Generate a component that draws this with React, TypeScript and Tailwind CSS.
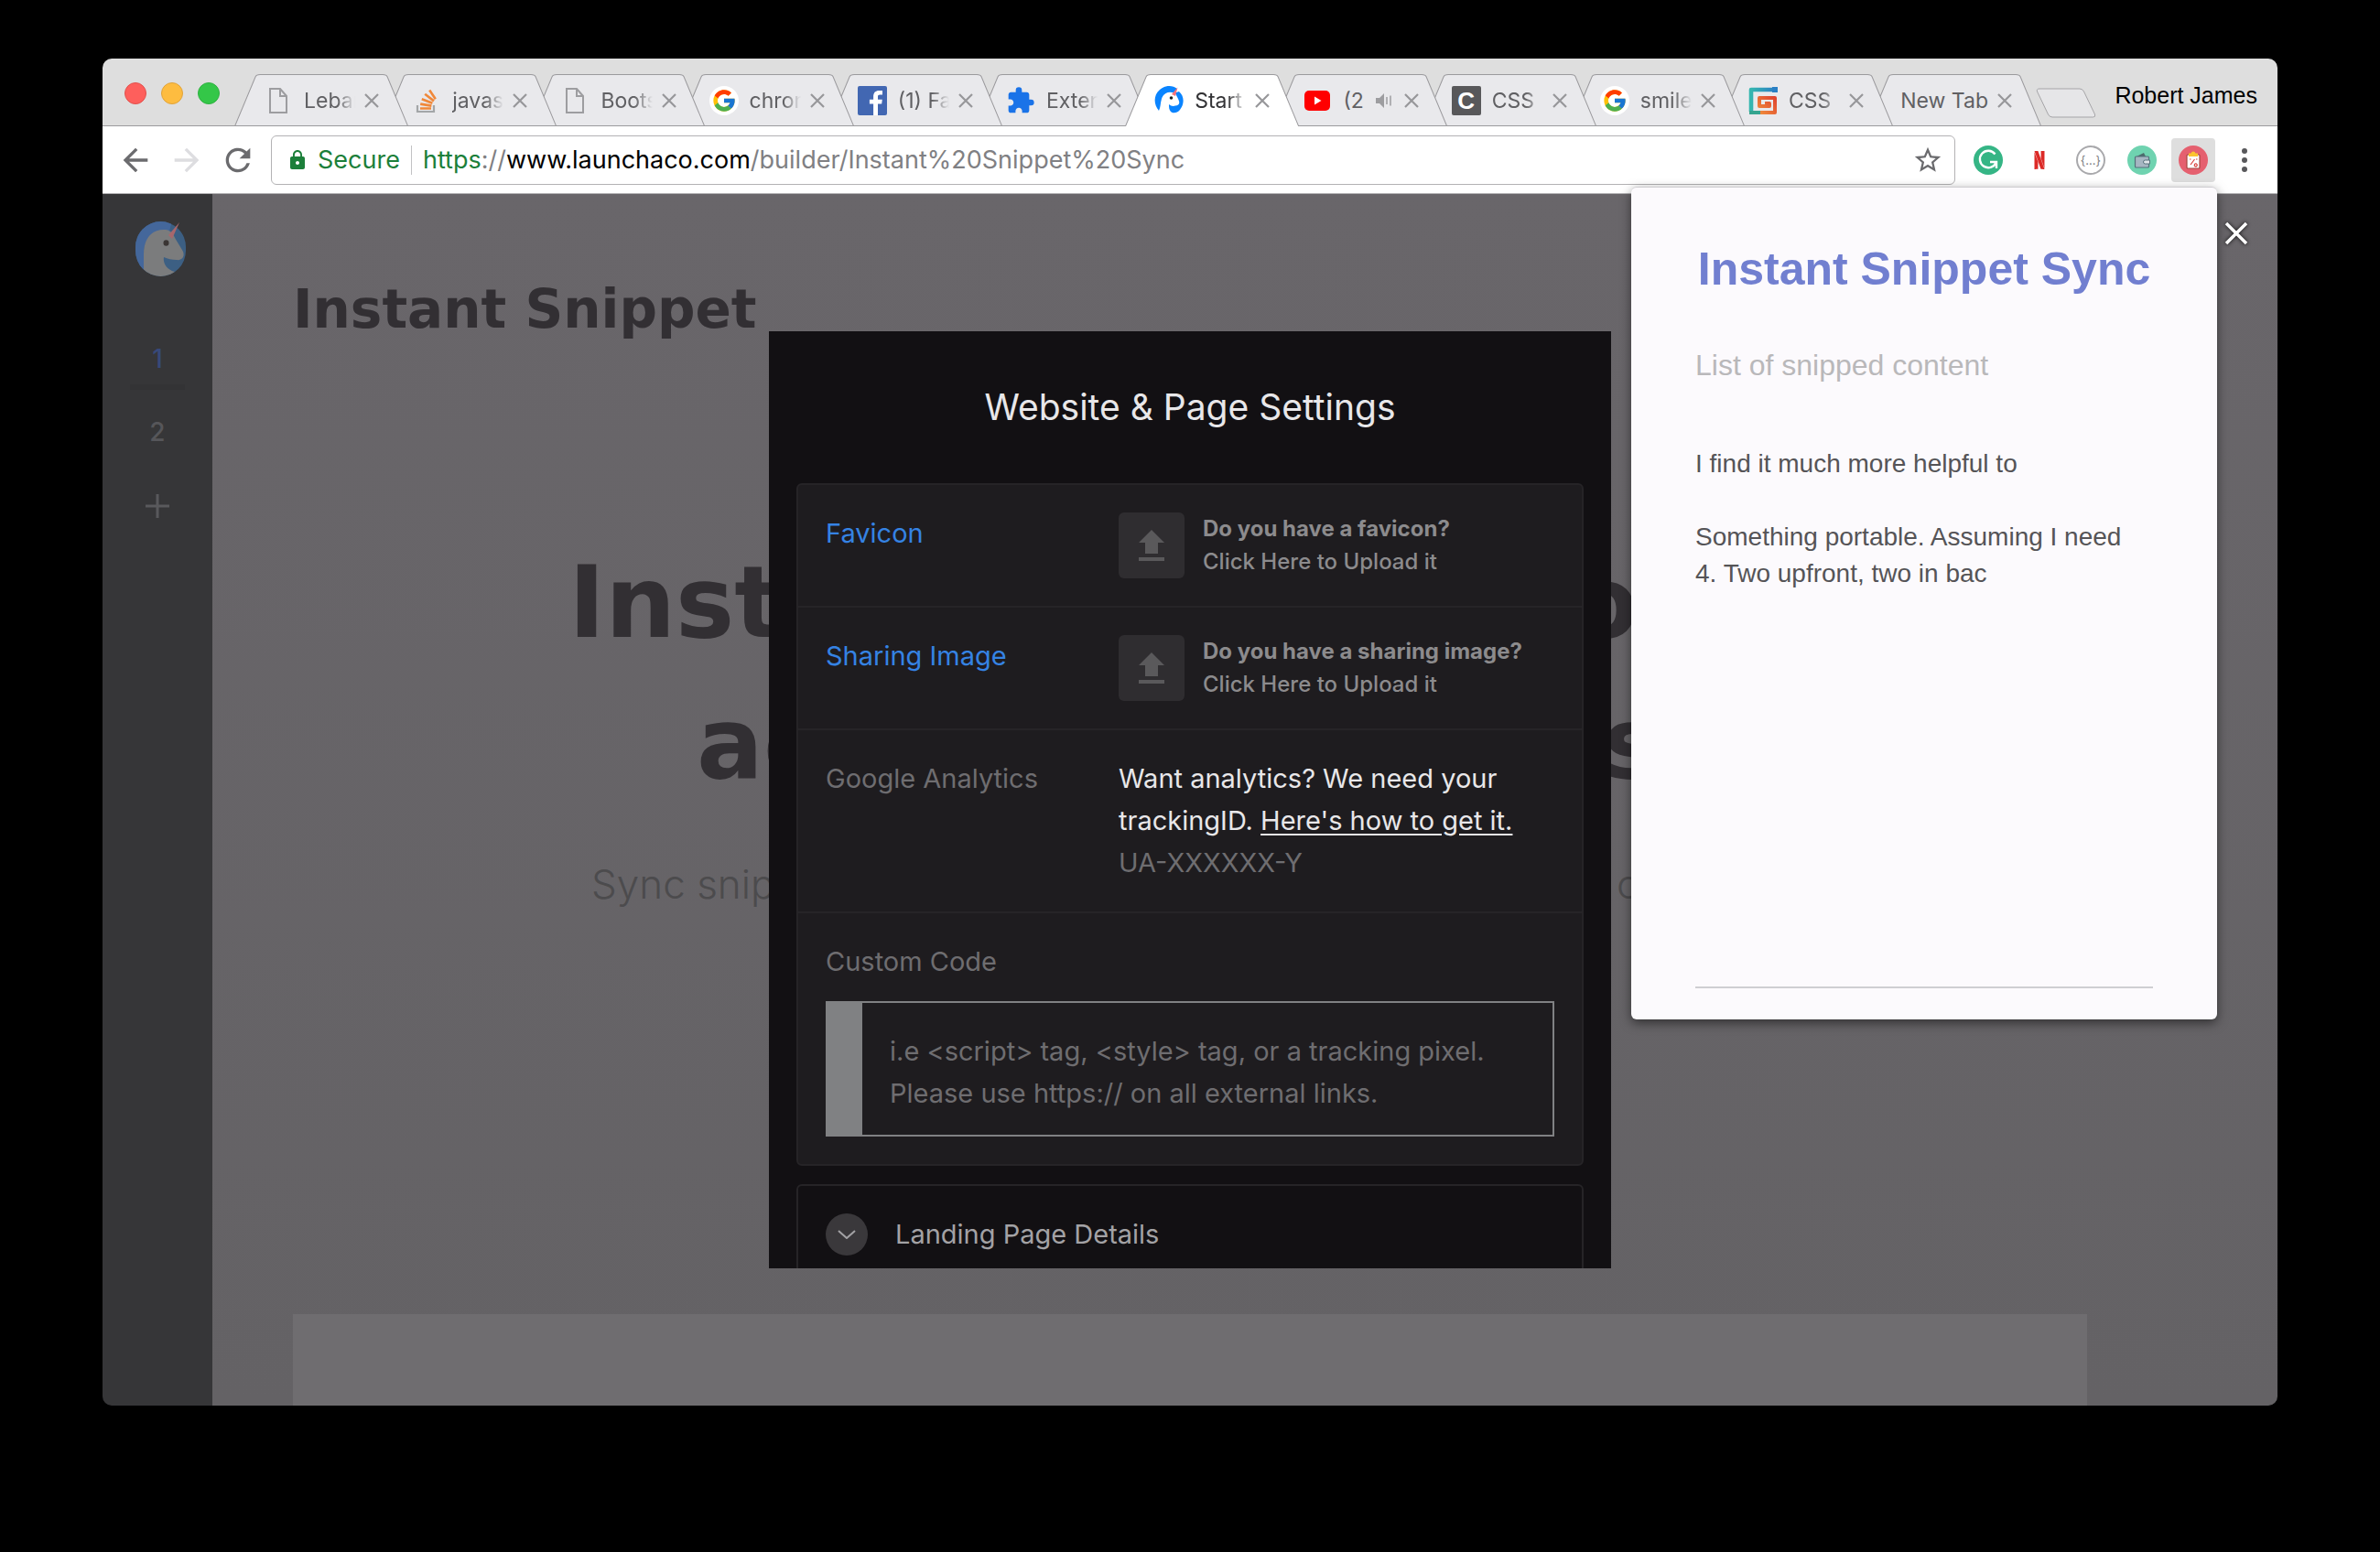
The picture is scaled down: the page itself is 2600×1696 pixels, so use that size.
import React from "react";
import { FcGoogle } from "react-icons/fc";
import { MdArrowBack, MdArrowForward, MdExtension, MdLock, MdRefresh, MdStarBorder } from "react-icons/md";
import { SiNetflix } from "react-icons/si";

function DocIcon() {
  return (
    <svg viewBox="0 0 32 32" className="size-8" fill="none" stroke="#9d9da0" strokeWidth="2">
      <path d="M7 3h11l7 8v18H7z" />
      <path d="M18 3v8h7" />
    </svg>
  );
}

function StackIcon() {
  return (
    <svg viewBox="0 0 32 32" className="size-8" fill="none">
      <path d="M6 21v7h18v-7" stroke="#a3a6a8" strokeWidth="2.2" />
      <g stroke="#f0883a" strokeWidth="2.6">
        <path d="M9 24.5h12" />
        <path d="M9.2 19.6l12.2 2" />
        <path d="M10.8 14.2l11.6 4.6" />
        <path d="M14.2 8.8l9.8 7.6" />
        <path d="M19.2 4.6l6.6 9.6" />
      </g>
    </svg>
  );
}

function GoogleIcon() {
  return (
    <span className="flex size-8 items-center justify-center rounded-full bg-white">
      <FcGoogle className="size-7" />
    </span>
  );
}

function FacebookIcon() {
  return (
    <svg viewBox="0 0 32 32" className="size-8">
      <rect width="32" height="32" rx="2" fill="#4267b2" />
      <path
        d="M22 32V19.6h4.2l.6-4.8H22v-3.1c0-1.4.4-2.3 2.4-2.3H27V5.1c-.5-.1-2-.2-3.7-.2-3.7 0-6.2 2.200-6.200 6.400v3.500h-4.200v4.800h4.200V32z"
        fill="#fff"
      />
    </svg>
  );
}

function UnicornTabIcon() {
  return (
    <svg viewBox="0 0 32 32" className="size-8">
      <path
        d="M5 27C-1 20-1 10 6 4 12-1 20-1 25 3l-3 5c-5-3-12-1-14 6-1.500 5-1 9-3 13z"
        fill="#0a84ff"
      />
      <path
        d="M27 6c6 5 6 14 1 20-3 4-8 4-10 2-2-2-2-5-2-8 2 2 5 2.500 7 1.500 3 0 5-2 4-5-.5-2-2.500-6-4.500-9z"
        fill="#0a84ff"
      />
      <path d="M25.500 1.500l-6.500 7.500 4 2z" fill="#f4737c" />
      <circle cx="18.500" cy="13" r="1.800" fill="#222" />
    </svg>
  );
}

function YoutubeIcon() {
  return (
    <svg viewBox="0 0 32 32" className="size-8">
      <rect x="2" y="5" width="28" height="22" rx="5" fill="#f00" />
      <path d="M13 11.500v9l7.500-4.500z" fill="#fff" />
    </svg>
  );
}

function CssTricksIcon() {
  return (
    <span className="flex size-8 items-center justify-center rounded-xs bg-[#58585a] font-['Liberation_Sans',sans-serif] text-[26px] leading-8 font-bold text-white">
      C
    </span>
  );
}

function SpiralIcon() {
  return (
    <svg viewBox="0 0 32 32" className="size-8" fill="none" strokeWidth="4.600" strokeLinejoin="round">
      <defs>
        <linearGradient id="spiralCool" x1="0" y1="0" x2="1" y2="0">
          <stop offset="0" stopColor="#35b6b0" />
          <stop offset="1" stopColor="#2a7fc4" />
        </linearGradient>
        <linearGradient id="spiralWarm" x1="0" y1="1" x2="1" y2="0">
          <stop offset="0" stopColor="#ef8a3c" />
          <stop offset="1" stopColor="#e0452f" />
        </linearGradient>
      </defs>
      <path d="M29 4H3v24" stroke="url(#spiralCool)" />
      <path d="M1 29h12" stroke="#35a58f" strokeWidth="4" />
      <path d="M13 29h16V13H12v9h11v-3h-5" stroke="url(#spiralWarm)" strokeWidth="4" />
      <path d="M26 1h6v6h-6z" fill="#2a7fc4" />
    </svg>
  );
}

function SpeakerIcon() {
  return (
    <svg viewBox="0 0 20 20" className="size-5 shrink-0">
      <path d="M1 7h4l5-5v16l-5-5H1z" fill="#9d9da0" />
      <path d="M13 6v8M17 4.500v11" stroke="#9d9da0" strokeWidth="1.500" />
    </svg>
  );
}

type TabInfo = { title: string; icon?: React.ReactNode; active?: boolean; audio?: boolean };

const tabs: TabInfo[] = [
  { title: "Lebanon", icon: <DocIcon /> },
  { title: "javascript", icon: <StackIcon /> },
  { title: "Bootstrap", icon: <DocIcon /> },
  { title: "chrome", icon: <GoogleIcon /> },
  { title: "(1) Facebook", icon: <FacebookIcon /> },
  { title: "Extensions", icon: <MdExtension className="size-8 text-[#1a73e8]" /> },
  { title: "Start", icon: <UnicornTabIcon />, active: true },
  { title: "(2", icon: <YoutubeIcon />, audio: true },
  { title: "CSS", icon: <CssTricksIcon /> },
  { title: "smiley", icon: <GoogleIcon /> },
  { title: "CSS", icon: <SpiralIcon /> },
  { title: "New Tab" },
];

function Tab({ tab, order }: { tab: TabInfo; order: number }) {
  return (
    <div className="relative -ml-7 flex h-[57px] min-w-0 flex-1 items-center first:ml-0" style={{ zIndex: order }}>
      <svg viewBox="0 0 190 57" preserveAspectRatio="none" className="absolute inset-0 h-full w-full">
        <path
          d="M.5 57 23 3Q24 .5 28 .5H162Q166 .5 167 3L189.500 57"
          fill={tab.active ? "#ffffff" : "#e9e9ec"}
          stroke="#9b9a9d"
          strokeWidth="1"
        />
        {!tab.active && <path d="M0 56.500H190" stroke="#9b9a9d" strokeWidth="1" />}
      </svg>
      <button
        type="button"
        className={
          tab.icon
            ? "relative ml-8 flex min-w-0 flex-1 items-center gap-3 text-left"
            : "relative ml-9 flex min-w-0 flex-1 items-center text-left"
        }
      >
        {tab.icon && <span className="flex size-8 shrink-0 items-center justify-center">{tab.icon}</span>}
        <span
          className={
            (tab.icon && !tab.audio
              ? "min-w-0 flex-1 overflow-hidden whitespace-nowrap [mask-image:linear-gradient(to_right,black_65%,transparent)] "
              : "whitespace-nowrap ") +
            (tab.active ? "text-[#333336]" : "text-[#606063]") +
            " text-[23px] leading-8"
          }
        >
          {tab.title}
        </span>
        {tab.audio && <SpeakerIcon />}
      </button>
      <button type="button" aria-label={`Close ${tab.title}`} className="relative mr-[30px] ml-2 flex size-5 shrink-0 items-center justify-center">
        <svg viewBox="0 0 16 16" className="size-4" stroke="#97979a" strokeWidth="2.200">
          <path d="M1 1l14 14M15 1L1 15" />
        </svg>
      </button>
    </div>
  );
}

function TabStrip() {
  return (
    <div className="flex h-[74px] items-end bg-[#dedede] shadow-[inset_0_-1px_0_#9b9a9d]">
      <div className="flex w-36 gap-4 self-start pt-[26px] pl-6">
        <button type="button" aria-label="Close window" className="size-6 rounded-full border border-[#e2504c] bg-[#fe5f5c]" />
        <button type="button" aria-label="Minimize window" className="size-6 rounded-full border border-[#e0a33a] bg-[#fdbc40]" />
        <button type="button" aria-label="Zoom window" className="size-6 rounded-full border border-[#2fb141] bg-[#34c748]" />
      </div>
      <div className="relative isolate flex min-w-0 flex-1">
        {tabs.map((tab, i) => (
          <Tab key={i} tab={tab} order={tab.active ? tabs.length + 1 : tabs.length - i} />
        ))}
      </div>
      <button type="button" aria-label="New tab" className="-ml-1.5 self-start pt-8">
        <svg viewBox="0 0 66 33" className="h-[33px] w-[66px]" fill="#e6e6e8" stroke="#a5a4a7" strokeWidth="1">
          <path d="M4 1h44q3 0 4.500 3l12 25q1 3-2 3H18q-3 0-4.500-3L1.500 4Q.5 1 4 1z" />
        </svg>
      </button>
      <button type="button" className="mr-[22px] ml-5 self-start pt-6 font-['Liberation_Sans',Arial,sans-serif] text-[25px] leading-8 whitespace-nowrap text-black">
        Robert James
      </button>
    </div>
  );
}

function Toolbar() {
  return (
    <div className="flex h-[74px] items-center border-b border-[#b3b2b4] bg-white pr-3 pl-2">
      <button type="button" aria-label="Back" className="flex w-14 shrink-0 justify-center">
        <MdArrowBack className="size-10 text-[#6b6b6e]" />
      </button>
      <button type="button" aria-label="Forward" className="flex w-14 shrink-0 justify-center">
        <MdArrowForward className="size-10 text-[#dddde0]" />
      </button>
      <button type="button" aria-label="Reload" className="mr-2 flex w-14 shrink-0 justify-center">
        <MdRefresh className="size-10 text-[#6b6b6e]" />
      </button>
      <div className="flex h-[54px] min-w-0 flex-1 items-center rounded-md border border-[#b3b2b4] pr-3 pl-4 text-[27px] leading-9">
        <MdLock className="size-6 shrink-0 text-[#1c7f3a]" />
        <span className="ml-2.5 text-[#1c7f3a]">Secure</span>
        <span className="mx-3 h-8 w-px bg-[#c2c2c4]" />
        <div className="min-w-0 flex-1 truncate text-[#808083]">
          <span className="text-[#1c7f3a]">https</span>://<span className="text-black">www.launchaco.com</span>
          /builder/Instant%20Snippet%20Sync
        </div>
        <button type="button" aria-label="Bookmark this page">
          <MdStarBorder className="size-[34px] text-[#6b6b6e]" />
        </button>
      </div>
      <div className="ml-3 flex shrink-0 items-center gap-2">
        <button type="button" aria-label="Grammarly" className="flex size-12 items-center justify-center">
          <svg viewBox="0 0 32 32" className="size-8">
            <circle cx="16" cy="16" r="16" fill="#35b585" />
            <path d="M23.500 9.500A9.200 9.200 0 1 0 24.800 18" fill="none" stroke="#fff" strokeWidth="2.400" />
            <path d="M18 18h7v7" fill="none" stroke="#fff" strokeWidth="2.400" />
          </svg>
        </button>
        <button type="button" aria-label="Netflix" className="flex size-12 items-center justify-center">
          <SiNetflix className="size-5 text-[#dc2a27]" />
        </button>
        <button type="button" aria-label="JSON viewer" className="flex size-12 items-center justify-center">
          <span className="flex size-8 items-center justify-center rounded-full border-2 border-[#a9a9ac] text-[13px] leading-4 text-[#7d7d80]">
            {"{...}"}
          </span>
        </button>
        <button type="button" aria-label="Wallet" className="flex size-12 items-center justify-center">
          <svg viewBox="0 0 32 32" className="size-8">
            <circle cx="16" cy="16" r="16" fill="#6fd3b0" />
            <path d="M10 12l8-4 2 4z" fill="#4c6b6c" />
            <rect x="8.500" y="12" width="15" height="12" rx="1" fill="#a6b6c2" stroke="#55707a" strokeWidth="1.200" />
            <path d="M24.500 16h-5a2 2 0 0 0 0 4h5z" fill="#dfe6ea" stroke="#55707a" strokeWidth="1" />
          </svg>
        </button>
        <button type="button" aria-label="Instant Snippet Sync" className="flex size-12 items-center justify-center rounded bg-[#dedede]">
          <svg viewBox="0 0 32 32" className="size-8">
            <circle cx="16" cy="16" r="16" fill="#e5606f" />
            <rect x="9" y="10" width="14" height="15" rx="1" fill="#fff" stroke="#a3463f" strokeWidth="1.200" />
            <path d="M11 8.500h2.500a2.600 2.600 0 0 1 5 0H21V12H11z" fill="#fcc32f" />
            <path d="M13 21l4.500-6M17.500 20.500a1.500 1.500 0 1 0 2.500 0 1.500 1.500 0 0 0-2.500 0M12 15h1.500M19 15h1.500" fill="none" stroke="#d8433c" strokeWidth="1.200" />
          </svg>
        </button>
        <button type="button" aria-label="Browser menu" className="flex h-12 w-12 flex-col items-center justify-center gap-1">
          <span className="size-1.5 rounded-full bg-[#58585b]" />
          <span className="size-1.5 rounded-full bg-[#58585b]" />
          <span className="size-1.5 rounded-full bg-[#58585b]" />
        </button>
      </div>
    </div>
  );
}

function Sidebar() {
  return (
    <nav className="flex w-[120px] shrink-0 flex-col items-center bg-[#363638] pt-[30px]">
      <a href="#home" aria-label="Launchaco" className="ml-2">
        <svg viewBox="0 0 56 60" className="h-[60px] w-14">
          <defs>
            <clipPath id="logoRound">
              <rect width="55" height="60" rx="28" />
            </clipPath>
          </defs>
          <g clipPath="url(#logoRound)">
            <rect width="56" height="60" fill="#3c5f83" />
            <path d="M0 60V0h40l-4 14C22 8 10 16 9 34v26z" fill="#44679b" />
            <path
              d="M9 60V36C9 18 18 9 31 9c5 0 8 2 10 5 4 8 8 13 11 19 2 5-1 10-7 9-5 0-10-1-14-3-1 6 2 13 12 16l-5 5z"
              fill="#7b7c7d"
            />
          </g>
          <path d="M48 1L36 15l4 4z" fill="#a8676c" />
          <ellipse cx="33.500" cy="23.500" rx="3" ry="3.300" fill="#3a3534" />
        </svg>
      </a>
      <a href="#page-1" className="mt-[70px] text-[28px] leading-10 font-medium text-[#37497a]">
        1
      </a>
      <span className="mt-2 h-1.5 w-[60px] bg-[#333335]" />
      <a href="#page-2" className="mt-[26px] text-[28px] leading-10 font-medium text-[#56565a]">
        2
      </a>
      <button type="button" aria-label="Add page" className="mt-12">
        <svg viewBox="0 0 26 26" className="size-[26px]" stroke="#59595c" strokeWidth="3">
          <path d="M13 0v26M0 13h26" />
        </svg>
      </button>
    </nav>
  );
}

function SitePreview() {
  return (
    <div className="flex min-w-0 flex-1 flex-col bg-linear-to-b from-[#69666a] to-[#646265] pr-52 pl-[88px] text-[#322f33]">
      <h1 className="pt-[86px] font-['DejaVu_Sans',sans-serif] text-[58px] leading-20 font-bold">Instant Snippet</h1>
      <h2 className="mt-[204px] font-['DejaVu_Sans',sans-serif] text-[108px] leading-[154px] font-bold whitespace-nowrap">
        <span className="flex justify-between pr-[490px] pl-[301px]">
          <span>Instant</span>
          <span>to</span>
        </span>
        <span className="flex justify-between pr-[464px] pl-[441px]">
          <span>across</span>
          <span>apps</span>
        </span>
      </h2>
      <p className="mt-12 flex justify-between pr-[300px] pl-[326px] text-[44px] leading-14 font-light whitespace-nowrap text-[#4c4b4d]">
        <span>Sync snippets</span>
        <span className="w-[214px]">computers</span>
      </p>
      <div className="mt-auto h-[100px] bg-[#6f6d70]" />
    </div>
  );
}

function UploadRow({ label, question }: { label: string; question: string }) {
  return (
    <div className="flex border-b-2 border-[#262427] px-[30px] py-[30px]">
      <a href="#upload" className="w-80 shrink-0 text-[29px] leading-[46px] text-[#3583e4]">
        {label}
      </a>
      <button type="button" className="flex min-w-0 flex-1 items-center gap-5 text-left text-2xl leading-9 text-[#8c8b8d]">
        <span className="flex size-[72px] shrink-0 items-center justify-center rounded-md bg-[#2f2d30]">
          <svg viewBox="0 0 28 34" className="h-[34px] w-7" fill="#5a595b">
            <path d="M14 0l14 14h-7v12H7V14H0z" />
            <rect y="30" width="28" height="4" />
          </svg>
        </span>
        <span className="flex flex-col">
          <span className="font-bold whitespace-nowrap">{question}</span>
          <span className="font-medium">Click Here to Upload it</span>
        </span>
      </button>
    </div>
  );
}

function SettingsModal() {
  return (
    <section className="flex h-[1024px] w-[920px] flex-col overflow-hidden bg-[#121013] px-[30px]">
      <h2 className="shrink-0 pt-[60px] pb-[60px] text-center text-[39px] leading-[46px] text-[#e8e7e9]">Website &amp; Page Settings</h2>
      <div className="shrink-0 rounded-md border-2 border-[#262427] bg-[#1e1c1f]">
        <UploadRow label="Favicon" question="Do you have a favicon?" />
        <UploadRow label="Sharing Image" question="Do you have a sharing image?" />
        <div className="flex border-b-2 border-[#262427] px-[30px] py-[30px] text-[29px] leading-[46px]">
          <label htmlFor="tracking-id" className="w-80 shrink-0 text-[#6e6d70]">
            Google Analytics
          </label>
          <div className="min-w-0 flex-1">
            <p className="whitespace-nowrap text-[#e8e7e9]">
              Want analytics? We need your
              <br />
              trackingID.{" "}
              <a href="#tracking" className="underline underline-offset-4">
                Here's how to get it.
              </a>
            </p>
            <input
              id="tracking-id"
              placeholder="UA-XXXXXX-Y"
              className="block h-[46px] w-full bg-transparent leading-[46px] outline-none placeholder:text-[#6e6d70]"
            />
          </div>
        </div>
        <div className="px-[30px] py-[30px] text-[29px] leading-[46px]">
          <label htmlFor="custom-code" className="block text-[#6e6d70]">
            Custom Code
          </label>
          <textarea
            id="custom-code"
            placeholder={"i.e <script> tag, <style> tag, or a tracking pixel.\nPlease use https:// on all external links."}
            className="mt-5 block h-[148px] w-full resize-none overflow-hidden border-2 border-l-40 border-[#808183] bg-transparent pt-[30px] pr-4 pl-[30px] outline-none placeholder:text-[#6e6d70]"
          />
        </div>
      </div>
      <div className="mt-5 shrink-0 rounded-md border-2 border-[#262427] px-[30px] py-[30px]">
        <button type="button" className="flex items-center gap-[30px] text-[29px] leading-[46px] text-[#a3a2a5]">
          <span className="flex size-[46px] items-center justify-center rounded-full bg-[#3a383b]">
            <svg viewBox="0 0 20 10" className="h-2.5 w-5" fill="none" stroke="#a3a2a5" strokeWidth="2">
              <path d="M1 1l9 8 9-8" />
            </svg>
          </span>
          Landing Page Details
        </button>
      </div>
    </section>
  );
}

function SnippetPopup() {
  return (
    <aside className="absolute top-[140px] right-[66px] flex h-[910px] w-[640px] flex-col rounded-md border-t border-[#cfced1] bg-[#fcfafd] px-[70px] pb-[34px] font-['Liberation_Sans',Arial,sans-serif] text-[#555457] shadow-[0_4px_12px_rgba(0,0,0,0.5)]">
      <h2 className="pt-[59px] text-center text-[50px] leading-[60px] font-bold whitespace-nowrap text-[#717fd0]">Instant Snippet Sync</h2>
      <h3 className="mt-[55px] text-[32px] leading-10 text-[#b9b8ba]">List of snipped content</h3>
      <ul className="mt-[68px] flex flex-col gap-10 pr-4 text-[28px] leading-10">
        <li>I find it much more helpful to</li>
        <li>Something portable. Assuming I need 4. Two upfront, two in bac</li>
      </ul>
      <hr className="mt-auto border-t-2 border-[#cfced2]" />
    </aside>
  );
}

export default function App() {
  return (
    <div className="flex min-h-screen flex-col bg-black px-28 pt-16 pb-40 font-[Inter,sans-serif]">
      <div className="relative flex flex-1 flex-col">
        <div className="flex flex-1 flex-col overflow-hidden rounded-[10px]">
          <TabStrip />
          <Toolbar />
          <main className="relative flex flex-1">
            <Sidebar />
            <SitePreview />
            <div className="absolute inset-0 flex items-center justify-center">
              <SettingsModal />
            </div>
            <button type="button" aria-label="Close settings" className="absolute top-[30px] right-8">
              <svg viewBox="0 0 26 26" className="size-[26px] drop-shadow-[0_0_2px_rgba(0,0,0,0.9)]" stroke="#fff" strokeWidth="3.500">
                <path d="M2 2l22 22M24 2L2 24" />
              </svg>
            </button>
          </main>
        </div>
        <SnippetPopup />
      </div>
    </div>
  );
}
